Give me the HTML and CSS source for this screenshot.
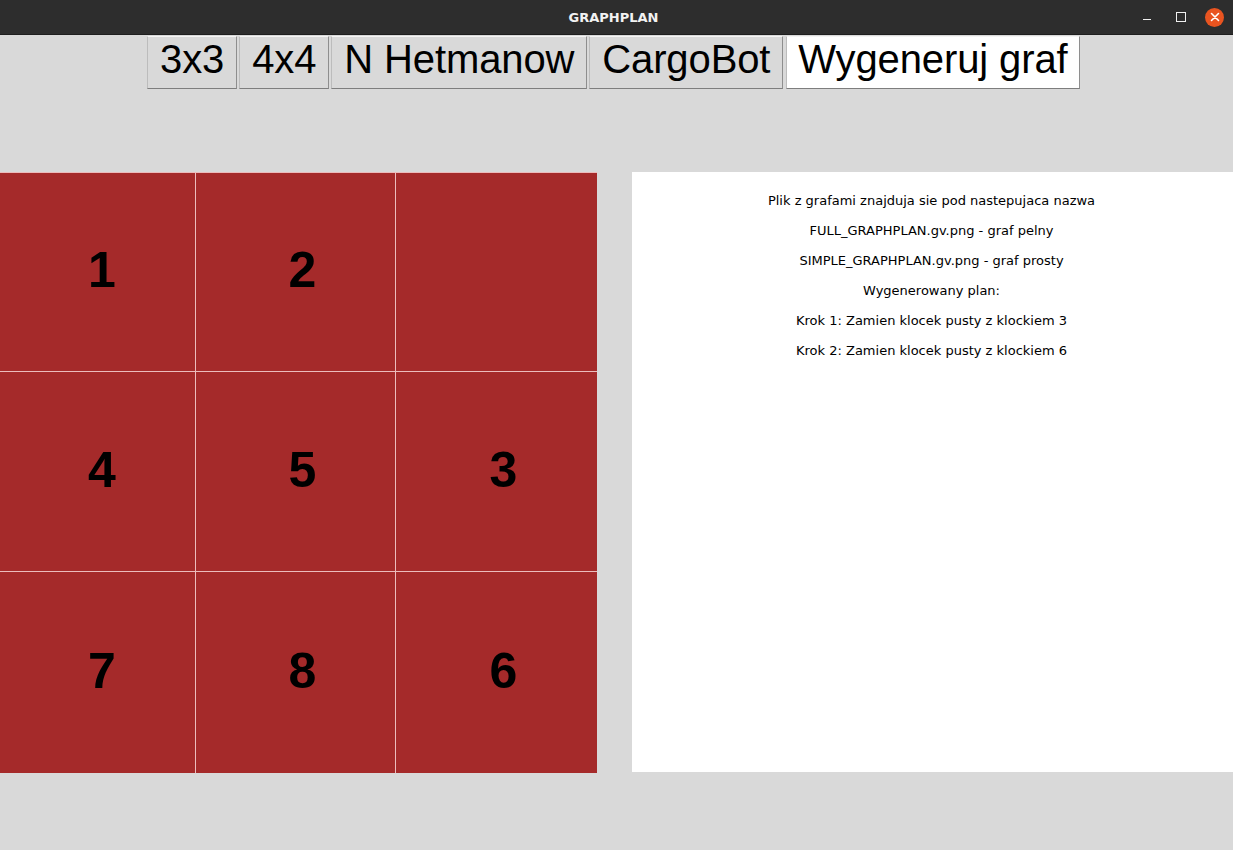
FILE: index.html
```html
<!DOCTYPE html>
<html lang="pl">
<head>
<meta charset="utf-8">
<title>GRAPHPLAN</title>
<link rel="stylesheet" href="styles.css">
</head>
<body>
<div class="window">
  <header class="titlebar">
    <span class="title">GRAPHPLAN</span>
    <div class="controls">
      <span class="ctl ctl-min"></span>
      <span class="ctl ctl-max"></span>
      <span class="ctl ctl-close">
        <svg width="10" height="10" viewBox="0 0 10 10"><path d="M1.5 1.5 L8.5 8.5 M8.5 1.5 L1.5 8.5" stroke="#fff" stroke-width="1.6" stroke-linecap="round"/></svg>
      </span>
    </div>
  </header>
  <nav class="toolbar">
    <button class="btn">3x3</button>
    <button class="btn">4x4</button>
    <button class="btn">N Hetmanow</button>
    <button class="btn">CargoBot</button>
    <button class="btn btn-active">Wygeneruj graf</button>
  </nav>
  <main class="main">
    <div class="board">
      <div class="cell">1</div>
      <div class="cell">2</div>
      <div class="cell"></div>
      <div class="cell">4</div>
      <div class="cell">5</div>
      <div class="cell">3</div>
      <div class="cell">7</div>
      <div class="cell">8</div>
      <div class="cell">6</div>
    </div>
    <section class="info">
      <p class="line">Plik z grafami znajduja sie pod nastepujaca nazwa</p>
      <p class="line">FULL_GRAPHPLAN.gv.png - graf pelny</p>
      <p class="line">SIMPLE_GRAPHPLAN.gv.png - graf prosty</p>
      <p class="line">Wygenerowany plan:</p>
      <p class="line">Krok 1: Zamien klocek pusty z klockiem 3</p>
      <p class="line">Krok 2: Zamien klocek pusty z klockiem 6</p>
    </section>
  </main>
</div>
</body>
</html>
```

FILE: styles.css
```css
* { box-sizing: border-box; }
html, body {
  margin: 0;
  padding: 0;
  background: #d9d9d9;
  overflow: hidden;
}
.window {
  width: 1233px;
  height: 850px;
  background: #d9d9d9;
  overflow: hidden;
}
.titlebar {
  height: 35px;
  background: #2d2d2d;
  display: flex;
  align-items: center;
  justify-content: center;
  position: relative;
  border-bottom: 1px solid #1e1e1e;
}
.title {
  color: #f2f2f2;
  font-family: "DejaVu Sans", sans-serif;
  font-weight: bold;
  font-size: 13px;
  margin-left: -6px;
}
.controls {
  position: absolute;
  right: 9px;
  top: 0;
  height: 34px;
  display: flex;
  align-items: center;
  gap: 15px;
}
.ctl {
  width: 19px;
  height: 19px;
  display: flex;
  align-items: center;
  justify-content: center;
  position: relative;
}
.ctl-min::before {
  content: "";
  width: 8px;
  height: 1px;
  background: #f0f0f0;
  margin-top: 4px;
}
.ctl-max::before {
  content: "";
  width: 8px;
  height: 8px;
  border: 1px solid #f0f0f0;
  margin-top: -1px;
}
.ctl-close {
  background: #e95420;
  border-radius: 50%;
}
.toolbar {
  display: flex;
  gap: 2px;
  padding-left: 147px;
  margin-top: 1px;
  height: 53px;
}
.btn {
  font-family: "Liberation Sans", Arial, sans-serif;
  font-size: 40px;
  line-height: 44px;
  letter-spacing: -0.12px;
  height: 53px;
  padding: 0 12px 7px;
  margin: 0;
  color: #000;
  background: #d9d9d9;
  border: 1px solid #a8a8a8;
  border-top-color: #f4f4f4;
  border-left-color: #bcbcbc;
  border-bottom-color: #7e7e7e;
  border-right-color: #8e8e8e;
  border-radius: 0;
}
.btn-active {
  background: #ffffff;
  margin-left: 1px;
  padding: 0 11px 7px;
}
.main {
  display: flex;
  align-items: flex-start;
  margin-top: 83px;
  gap: 35px;
}
.board {
  margin-left: -5px;
  display: grid;
  grid-template-columns: 200px 199px 201px;
  grid-template-rows: 198px 199px 201px;
  gap: 1px;
  padding-top: 1px;
  background: #ecbcbc;
}
.cell {
  background: #a52a2a;
  display: flex;
  align-items: center;
  justify-content: center;
  padding-left: 14px;
  padding-bottom: 4px;
  font-family: "Liberation Sans", Arial, sans-serif;
  font-weight: bold;
  font-size: 50px;
  color: #000;
}
.info {
  width: 601px;
  height: 600px;
  background: #ffffff;
  padding-top: 14px;
  padding-right: 2px;
  text-align: center;
  font-family: "DejaVu Sans", sans-serif;
  font-size: 13px;
  color: #000;
}
.line {
  margin: 0;
  line-height: 30px;
}
```
